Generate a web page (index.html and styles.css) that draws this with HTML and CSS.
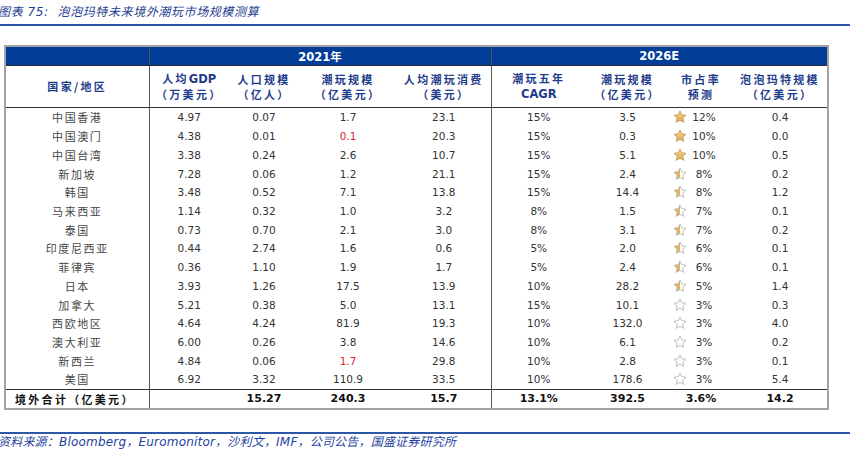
FILE: index.html
```html
<!DOCTYPE html>
<html lang="zh-CN">
<head>
<meta charset="utf-8">
<title>泡泡玛特未来境外潮玩市场规模测算</title>
<link rel="stylesheet" href="styles.css">
</head>
<body>
<svg class="defs" width="0" height="0" aria-hidden="true">
  <defs>
    <linearGradient id="gold" x1="0" y1="0" x2="0" y2="1">
      <stop offset="0" stop-color="#f6d995"/>
      <stop offset="1" stop-color="#d9a74c"/>
    </linearGradient>
    <linearGradient id="half" x1="0" y1="0" x2="1" y2="0">
      <stop offset="0.5" stop-color="#e3b55e"/>
      <stop offset="0.5" stop-color="#ffffff"/>
    </linearGradient>
    <symbol id="star" viewBox="0 0 24 24">
      <path d="M12 1.6l3.05 6.55 7.15.95-5.25 4.95 1.35 7.1L12 17.7l-6.3 3.45 1.35-7.1L1.8 9.1l7.15-.95z"/>
    </symbol>
  </defs>
</svg>
<div class="page">
  <div class="title">图表 75:&nbsp; 泡泡玛特未来境外潮玩市场规模测算</div>
  <table class="grid">
    <colgroup>
      <col class="c-country">
      <col class="c-gdp">
      <col class="c-pop">
      <col class="c-toy">
      <col class="c-spend">
      <col class="c-cagr">
      <col class="c-toy26">
      <col class="c-share">
      <col class="c-pop26">
    </colgroup>
    <thead>
      <tr class="band">
        <th class="sep"></th>
        <th colspan="4" class="sep">2021年</th>
        <th colspan="4">2026E</th>
      </tr>
      <tr class="heads">
        <th class="sep">国家/地区</th>
        <th>人均<b class="lat">GDP</b><br>（万美元）</th>
        <th>人口规模<br>（亿人）</th>
        <th>潮玩规模<br>（亿美元）</th>
        <th class="sep">人均潮玩消费<br>（美元）</th>
        <th>潮玩五年<br><b class="lat">CAGR</b></th>
        <th>潮玩规模<br>（亿美元）</th>
        <th>市占率<br>预测</th>
        <th>泡泡玛特规模<br>（亿美元）</th>
      </tr>
    </thead>
    <tbody>
      <tr><td class="name sep">中国香港</td><td>4.97</td><td>0.07</td><td>1.7</td><td class="sep">23.1</td><td>15%</td><td>3.5</td><td><div class="share"><svg class="star full"><use href="#star"/></svg><span class="pct">12%</span></div></td><td>0.4</td></tr>
      <tr><td class="name sep">中国澳门</td><td>4.38</td><td>0.01</td><td class="red">0.1</td><td class="sep">20.3</td><td>15%</td><td>0.3</td><td><div class="share"><svg class="star full"><use href="#star"/></svg><span class="pct">10%</span></div></td><td>0.0</td></tr>
      <tr><td class="name sep">中国台湾</td><td>3.38</td><td>0.24</td><td>2.6</td><td class="sep">10.7</td><td>15%</td><td>5.1</td><td><div class="share"><svg class="star full"><use href="#star"/></svg><span class="pct">10%</span></div></td><td>0.5</td></tr>
      <tr><td class="name sep">新加坡</td><td>7.28</td><td>0.06</td><td>1.2</td><td class="sep">21.1</td><td>15%</td><td>2.4</td><td><div class="share"><svg class="star half"><use href="#star"/></svg><span class="pct">8%</span></div></td><td>0.2</td></tr>
      <tr><td class="name sep">韩国</td><td>3.48</td><td>0.52</td><td>7.1</td><td class="sep">13.8</td><td>15%</td><td>14.4</td><td><div class="share"><svg class="star half"><use href="#star"/></svg><span class="pct">8%</span></div></td><td>1.2</td></tr>
      <tr><td class="name sep">马来西亚</td><td>1.14</td><td>0.32</td><td>1.0</td><td class="sep">3.2</td><td>8%</td><td>1.5</td><td><div class="share"><svg class="star half"><use href="#star"/></svg><span class="pct">7%</span></div></td><td>0.1</td></tr>
      <tr><td class="name sep">泰国</td><td>0.73</td><td>0.70</td><td>2.1</td><td class="sep">3.0</td><td>8%</td><td>3.1</td><td><div class="share"><svg class="star half"><use href="#star"/></svg><span class="pct">7%</span></div></td><td>0.2</td></tr>
      <tr><td class="name sep">印度尼西亚</td><td>0.44</td><td>2.74</td><td>1.6</td><td class="sep">0.6</td><td>5%</td><td>2.0</td><td><div class="share"><svg class="star half"><use href="#star"/></svg><span class="pct">6%</span></div></td><td>0.1</td></tr>
      <tr><td class="name sep">菲律宾</td><td>0.36</td><td>1.10</td><td>1.9</td><td class="sep">1.7</td><td>5%</td><td>2.4</td><td><div class="share"><svg class="star half"><use href="#star"/></svg><span class="pct">6%</span></div></td><td>0.1</td></tr>
      <tr><td class="name sep">日本</td><td>3.93</td><td>1.26</td><td>17.5</td><td class="sep">13.9</td><td>10%</td><td>28.2</td><td><div class="share"><svg class="star half"><use href="#star"/></svg><span class="pct">5%</span></div></td><td>1.4</td></tr>
      <tr><td class="name sep">加拿大</td><td>5.21</td><td>0.38</td><td>5.0</td><td class="sep">13.1</td><td>15%</td><td>10.1</td><td><div class="share"><svg class="star empty"><use href="#star"/></svg><span class="pct">3%</span></div></td><td>0.3</td></tr>
      <tr><td class="name sep">西欧地区</td><td>4.64</td><td>4.24</td><td>81.9</td><td class="sep">19.3</td><td>10%</td><td>132.0</td><td><div class="share"><svg class="star empty"><use href="#star"/></svg><span class="pct">3%</span></div></td><td>4.0</td></tr>
      <tr><td class="name sep">澳大利亚</td><td>6.00</td><td>0.26</td><td>3.8</td><td class="sep">14.6</td><td>10%</td><td>6.1</td><td><div class="share"><svg class="star empty"><use href="#star"/></svg><span class="pct">3%</span></div></td><td>0.2</td></tr>
      <tr><td class="name sep">新西兰</td><td>4.84</td><td>0.06</td><td class="red">1.7</td><td class="sep">29.8</td><td>10%</td><td>2.8</td><td><div class="share"><svg class="star empty"><use href="#star"/></svg><span class="pct">3%</span></div></td><td>0.1</td></tr>
      <tr><td class="name sep">美国</td><td>6.92</td><td>3.32</td><td>110.9</td><td class="sep">33.5</td><td>10%</td><td>178.6</td><td><div class="share"><svg class="star empty"><use href="#star"/></svg><span class="pct">3%</span></div></td><td>5.4</td></tr>
    </tbody>
    <tfoot>
      <tr class="total"><td class="label sep">境外合计（亿美元）</td><td></td><td>15.27</td><td>240.3</td><td class="sep">15.7</td><td>13.1%</td><td>392.5</td><td>3.6%</td><td>14.2</td></tr>
    </tfoot>
  </table>
  <div class="source">资料来源：Bloomberg，Euromonitor，沙利文，IMF，公司公告，国盛证券研究所</div>
</div>
</body>
</html>
```

FILE: styles.css
```css
html, body {
  margin: 0;
  padding: 0;
  background: #ffffff;
}

body {
  font-family: "DejaVu Sans", "Noto Sans CJK SC", sans-serif;
  color: #333333;
  overflow: hidden;
}

.defs {
  position: absolute;
  width: 0;
  height: 0;
  overflow: hidden;
}

.page {
  width: 850px;
}

.title {
  height: 24px;
  line-height: 24px;
  border-bottom: 2px solid #2b57a6;
  color: #1f3d8f;
  font-family: "DejaVu Sans", "Noto Sans CJK SC", sans-serif;
  font-style: italic;
  font-size: 12px;
  letter-spacing: 0.6px;
  text-indent: -2px;
  white-space: nowrap;
  overflow: hidden;
}

.grid {
  margin: 19px 0 0 4px;
  width: 823px;
  table-layout: fixed;
  border-collapse: collapse;
  border: 2px solid #a3a3a3;
}

.c-country { width: 144px; }
.c-gdp { width: 80px; }
.c-pop { width: 70px; }
.c-toy { width: 98px; }
.c-spend { width: 94px; }
.c-cagr { width: 95px; }
.c-toy26 { width: 83px; }
.c-share { width: 64px; }
.c-pop26 { width: 95px; }

.grid th,
.grid td {
  padding: 0;
  text-align: center;
  white-space: nowrap;
  vertical-align: middle;
}

.sep {
  border-right: 1px solid #555555;
}

.band th {
  height: 18px;
  background: #023e97;
  color: #ffffff;
  font-family: "DejaVu Sans", "Noto Sans CJK SC", sans-serif;
  font-weight: bold;
  font-size: 11.5px;
  border-bottom: 1px solid #2a2a2a;
}

.heads th {
  height: 41px;
  color: #1e3c8c;
  font-family: "Noto Sans CJK SC", sans-serif;
  font-weight: bold;
  font-size: 11px;
  line-height: 15px;
  letter-spacing: 2.3px;
  border-bottom: 1px solid #333333;
}

.heads .lat {
  font-family: "DejaVu Sans", sans-serif;
  font-size: 11.5px;
  letter-spacing: 0;
}

.grid tbody td {
  height: 18.73px;
  font-size: 10.5px;
  color: #333333;
}

.grid tbody td.name {
  font-family: "Noto Sans CJK SC", sans-serif;
  font-size: 11px;
  letter-spacing: 1.6px;
  color: #474747;
}

.grid td.red {
  color: #e0262b;
}

.share {
  display: flex;
  align-items: center;
  padding-left: 4px;
}

.star {
  flex: none;
  width: 14px;
  height: 14px;
}

.star.full {
  fill: url(#gold);
  stroke: #c39442;
  stroke-width: 1.3;
}

.star.half {
  fill: url(#half);
  stroke: #a9a9a9;
  stroke-width: 1.3;
}

.star.empty {
  fill: #ffffff;
  stroke: #a9a9a9;
  stroke-width: 1.3;
}

.pct {
  width: 30px;
  margin-left: 2px;
  text-align: center;
}

.total td {
  height: 18px;
  border-top: 1px solid #333333;
  font-weight: bold;
  font-size: 11px;
  color: #111111;
}

.total td.label {
  text-align: left;
  padding-left: 9px;
  font-family: "Noto Sans CJK SC", sans-serif;
  font-size: 11px;
  letter-spacing: 2.3px;
}

.source {
  margin-top: 22px;
  border-top: 2px solid #2b57a6;
  line-height: 16px;
  color: #1f3fa0;
  font-style: italic;
  font-size: 12px;
  letter-spacing: 0.2px;
  text-indent: -2px;
  white-space: nowrap;
  overflow: hidden;
}
```
